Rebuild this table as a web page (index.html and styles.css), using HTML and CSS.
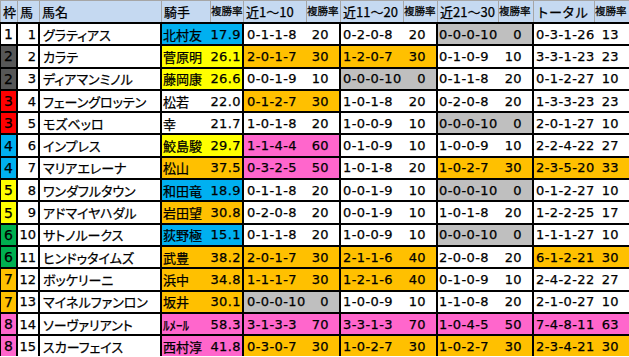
FILE: index.html
```html
<!DOCTYPE html>
<html lang="ja">
<head>
<meta charset="utf-8">
<link rel="stylesheet" href="styles.css">
</head>
<body>
<div class="sheet">
  <div class="head">
    <div class="h">枠</div><div class="h">馬</div><div class="h">馬名</div><div class="h">騎手</div><div class="h sm">複勝率</div>
    <div class="h">近1～10</div><div class="h sm">複勝率</div><div class="h">近11～20</div><div class="h sm">複勝率</div>
    <div class="h">近21～30</div><div class="h sm">複勝率</div><div class="h">トータル</div><div class="h sm">複勝率</div>
  </div>

  <div class="row">
    <div class="c waku w1">1</div><div class="c num">1</div><div class="c name">グラティアス</div>
    <div class="c jk b"><span>北村友</span><span class="n">17.9</span></div>
    <div class="c rec"><span class="n">0-1-1-8</span><span class="n">20</span></div>
    <div class="c rec"><span class="n">0-2-0-8</span><span class="n">20</span></div>
    <div class="c rec g"><span class="n">0-0-0-10</span><span class="n">0</span></div>
    <div class="c rec"><span class="n">0-3-1-26</span><span class="n">13</span></div>
  </div>
  <div class="row">
    <div class="c waku w2">2</div><div class="c num">2</div><div class="c name">カラテ</div>
    <div class="c jk y"><span>菅原明</span><span class="n">26.1</span></div>
    <div class="c rec o"><span class="n">2-0-1-7</span><span class="n">30</span></div>
    <div class="c rec o"><span class="n">1-2-0-7</span><span class="n">30</span></div>
    <div class="c rec"><span class="n">0-1-0-9</span><span class="n">10</span></div>
    <div class="c rec"><span class="n">3-3-1-23</span><span class="n">23</span></div>
  </div>
  <div class="row">
    <div class="c waku w2">2</div><div class="c num">3</div><div class="c name">ディアマンミノル</div>
    <div class="c jk y"><span>藤岡康</span><span class="n">26.6</span></div>
    <div class="c rec"><span class="n">0-0-1-9</span><span class="n">10</span></div>
    <div class="c rec g"><span class="n">0-0-0-10</span><span class="n">0</span></div>
    <div class="c rec"><span class="n">0-1-1-8</span><span class="n">20</span></div>
    <div class="c rec"><span class="n">0-1-2-27</span><span class="n">10</span></div>
  </div>
  <div class="row">
    <div class="c waku w3">3</div><div class="c num">4</div><div class="c name">フェーングロッテン</div>
    <div class="c jk"><span>松若</span><span class="n">22.0</span></div>
    <div class="c rec o"><span class="n">0-1-2-7</span><span class="n">30</span></div>
    <div class="c rec"><span class="n">1-0-1-8</span><span class="n">20</span></div>
    <div class="c rec"><span class="n">0-2-0-8</span><span class="n">20</span></div>
    <div class="c rec"><span class="n">1-3-3-23</span><span class="n">23</span></div>
  </div>
  <div class="row">
    <div class="c waku w3">3</div><div class="c num">5</div><div class="c name">モズベッロ</div>
    <div class="c jk"><span>幸</span><span class="n">21.7</span></div>
    <div class="c rec"><span class="n">1-0-1-8</span><span class="n">20</span></div>
    <div class="c rec"><span class="n">1-0-0-9</span><span class="n">10</span></div>
    <div class="c rec g"><span class="n">0-0-0-10</span><span class="n">0</span></div>
    <div class="c rec"><span class="n">2-0-1-27</span><span class="n">10</span></div>
  </div>
  <div class="row">
    <div class="c waku w4">4</div><div class="c num">6</div><div class="c name">インプレス</div>
    <div class="c jk y"><span>鮫島駿</span><span class="n">29.7</span></div>
    <div class="c rec p"><span class="n">1-1-4-4</span><span class="n">60</span></div>
    <div class="c rec"><span class="n">0-1-0-9</span><span class="n">10</span></div>
    <div class="c rec"><span class="n">1-0-0-9</span><span class="n">10</span></div>
    <div class="c rec"><span class="n">2-2-4-22</span><span class="n">27</span></div>
  </div>
  <div class="row">
    <div class="c waku w4">4</div><div class="c num">7</div><div class="c name">マリアエレーナ</div>
    <div class="c jk o"><span>松山</span><span class="n">37.5</span></div>
    <div class="c rec p"><span class="n">0-3-2-5</span><span class="n">50</span></div>
    <div class="c rec"><span class="n">1-0-1-8</span><span class="n">20</span></div>
    <div class="c rec o"><span class="n">1-0-2-7</span><span class="n">30</span></div>
    <div class="c rec o"><span class="n">2-3-5-20</span><span class="n">33</span></div>
  </div>
  <div class="row">
    <div class="c waku w5">5</div><div class="c num">8</div><div class="c name">ワンダフルタウン</div>
    <div class="c jk b"><span>和田竜</span><span class="n">18.9</span></div>
    <div class="c rec"><span class="n">0-1-1-8</span><span class="n">20</span></div>
    <div class="c rec"><span class="n">0-0-1-9</span><span class="n">10</span></div>
    <div class="c rec g"><span class="n">0-0-0-10</span><span class="n">0</span></div>
    <div class="c rec"><span class="n">0-1-2-27</span><span class="n">10</span></div>
  </div>
  <div class="row">
    <div class="c waku w5">5</div><div class="c num">9</div><div class="c name">アドマイヤハダル</div>
    <div class="c jk o"><span>岩田望</span><span class="n">30.8</span></div>
    <div class="c rec"><span class="n">0-2-0-8</span><span class="n">20</span></div>
    <div class="c rec"><span class="n">0-0-1-9</span><span class="n">10</span></div>
    <div class="c rec"><span class="n">1-0-1-8</span><span class="n">20</span></div>
    <div class="c rec"><span class="n">1-2-2-25</span><span class="n">17</span></div>
  </div>
  <div class="row">
    <div class="c waku w6">6</div><div class="c num">10</div><div class="c name">サトノルークス</div>
    <div class="c jk b"><span>荻野極</span><span class="n">15.1</span></div>
    <div class="c rec"><span class="n">0-1-1-8</span><span class="n">20</span></div>
    <div class="c rec"><span class="n">1-0-0-9</span><span class="n">10</span></div>
    <div class="c rec g"><span class="n">0-0-0-10</span><span class="n">0</span></div>
    <div class="c rec"><span class="n">1-1-1-27</span><span class="n">10</span></div>
  </div>
  <div class="row">
    <div class="c waku w6">6</div><div class="c num">11</div><div class="c name">ヒンドゥタイムズ</div>
    <div class="c jk o"><span>武豊</span><span class="n">38.2</span></div>
    <div class="c rec o"><span class="n">2-0-1-7</span><span class="n">30</span></div>
    <div class="c rec o"><span class="n">2-1-1-6</span><span class="n">40</span></div>
    <div class="c rec"><span class="n">2-0-0-8</span><span class="n">20</span></div>
    <div class="c rec o"><span class="n">6-1-2-21</span><span class="n">30</span></div>
  </div>
  <div class="row">
    <div class="c waku w7">7</div><div class="c num">12</div><div class="c name">ボッケリーニ</div>
    <div class="c jk o"><span>浜中</span><span class="n">34.8</span></div>
    <div class="c rec o"><span class="n">1-1-1-7</span><span class="n">30</span></div>
    <div class="c rec o"><span class="n">1-2-1-6</span><span class="n">40</span></div>
    <div class="c rec"><span class="n">0-1-0-9</span><span class="n">10</span></div>
    <div class="c rec"><span class="n">2-4-2-22</span><span class="n">27</span></div>
  </div>
  <div class="row">
    <div class="c waku w7">7</div><div class="c num">13</div><div class="c name">マイネルファンロン</div>
    <div class="c jk o"><span>坂井</span><span class="n">30.1</span></div>
    <div class="c rec g"><span class="n">0-0-0-10</span><span class="n">0</span></div>
    <div class="c rec"><span class="n">1-0-0-9</span><span class="n">10</span></div>
    <div class="c rec"><span class="n">1-1-0-8</span><span class="n">20</span></div>
    <div class="c rec"><span class="n">2-1-0-27</span><span class="n">10</span></div>
  </div>
  <div class="row">
    <div class="c waku w8">8</div><div class="c num">14</div><div class="c name">ソーヴァリアント</div>
    <div class="c jk p"><span>ﾙﾒｰﾙ</span><span class="n">58.3</span></div>
    <div class="c rec p"><span class="n">3-1-3-3</span><span class="n">70</span></div>
    <div class="c rec p"><span class="n">3-3-1-3</span><span class="n">70</span></div>
    <div class="c rec p"><span class="n">1-0-4-5</span><span class="n">50</span></div>
    <div class="c rec p"><span class="n">7-4-8-11</span><span class="n">63</span></div>
  </div>
  <div class="row">
    <div class="c waku w8">8</div><div class="c num">15</div><div class="c name">スカーフェイス</div>
    <div class="c jk p"><span>西村淳</span><span class="n">41.8</span></div>
    <div class="c rec o"><span class="n">0-3-0-7</span><span class="n">30</span></div>
    <div class="c rec o"><span class="n">1-0-2-7</span><span class="n">30</span></div>
    <div class="c rec o"><span class="n">1-0-2-7</span><span class="n">30</span></div>
    <div class="c rec o"><span class="n">2-3-4-21</span><span class="n">30</span></div>
  </div>
</div>
</body>
</html>
```

FILE: styles.css
```css
html, body {
  margin: 0;
  padding: 0;
  background: #ffffff;
}

body {
  width: 629px;
  height: 357px;
  overflow: hidden;
  font-family: "Noto Sans CJK JP", sans-serif;
  font-size: 13px;
  color: #000000;
  -webkit-text-stroke: 0.25px #000000;
}

.sheet {
  display: flex;
  flex-direction: column;
  gap: 2px;
  background: #000000;
  width: 629px;
}

.head {
  display: grid;
  grid-template-columns: 16px 21px 121px 48px 32px 62px 33px 62px 33px 60px 34px 60px 34px;
  column-gap: 1px;
  padding: 1px 0 0 1px;
  height: 22px;
  box-sizing: border-box;
  background: #a6a6a6;
}

.h {
  background: #c5d9f1;
  display: flex;
  align-items: center;
  padding-left: 2px;
  white-space: nowrap;
  overflow: hidden;
  line-height: 1;
}

.h.sm {
  font-size: 10.5px;
  padding-left: 0;
}

.row {
  display: grid;
  grid-template-columns: 15px 20px 120px 80px 95px 95px 94px 95px;
  column-gap: 2px;
  padding-left: 1px;
  height: 20.3px;
}

.c {
  background: #ffffff;
  display: flex;
  align-items: center;
  white-space: nowrap;
  overflow: hidden;
  line-height: 1;
}

.n {
  font-family: "DejaVu Sans", sans-serif;
  font-size: 13px;
  letter-spacing: 0.4px;
}

.waku {
  justify-content: center;
  font-family: "DejaVu Sans", sans-serif;
  font-size: 14px;
}

.num {
  justify-content: flex-end;
  padding-right: 2px;
  font-family: "DejaVu Sans", sans-serif;
  font-size: 13px;
}

.name {
  padding-left: 3px;
  font-feature-settings: "palt";
}

.jk {
  justify-content: space-between;
  padding: 0 1px 0 1px;
}

.rec {
  justify-content: space-between;
  padding: 0 10px 0 2px;
}

.row .rec:nth-child(5) { padding-left: 3px; }
.row .rec:nth-child(7) { padding-left: 1px; }

.w1 { background: #ffffff; }
.w2 { background: #575757; }
.w3 { background: #ff0000; }
.w4 { background: #00b0f0; }
.w5 { background: #ffff00; }
.w6 { background: #00b050; }
.w7 { background: #ffc000; }
.w8 { background: #ff66cc; }

.o { background: #ffc000; }
.g { background: #bfbfbf; }
.p { background: #ff66cc; }
.y { background: #ffff00; }
.b { background: #00b0f0; }
```
